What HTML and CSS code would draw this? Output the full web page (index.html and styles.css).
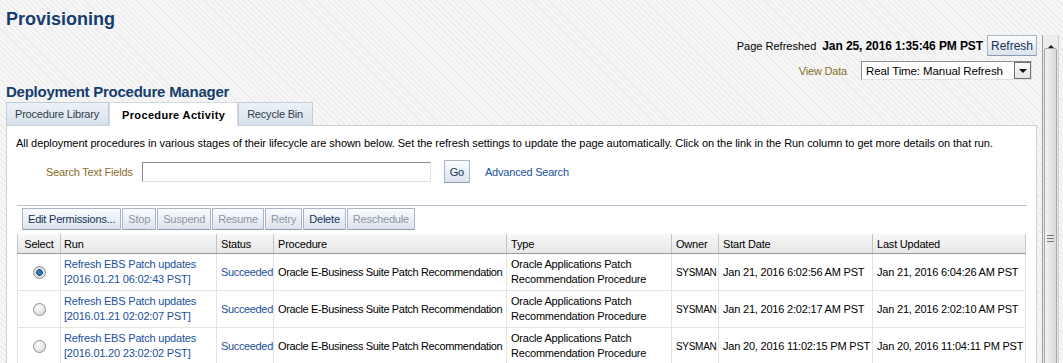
FILE: index.html
```html
<!DOCTYPE html>
<html lang="en">
<head>
    <meta charset="UTF-8">
    <title>Provisioning</title>
    <link rel="stylesheet" href="styles.css">
</head>
<body>
    <h1 class="page-title">Provisioning</h1>
    <div class="frame">
        <div class="main">
            <div class="refresh-bar">
                <span>Page Refreshed</span>
                <b class="when">Jan 25, 2016 1:35:46 PM PST</b>
                <button class="btn refresh">Refresh</button>
            </div>
            <div class="view-row">
                <span class="label">View Data</span>
                <div class="select">
                    <span>Real Time: Manual Refresh</span>
                    <span class="select-arrow"></span>
                </div>
            </div>
            <h2 class="section-title">Deployment Procedure Manager</h2>
            <div class="tabs">
                <div class="tab">Procedure Library</div>
                <div class="tab active">Procedure Activity</div>
                <div class="tab">Recycle Bin</div>
            </div>
            <div class="panel">
                <p class="intro">All deployment procedures in various stages of their lifecycle are shown below. Set the refresh settings to update the page automatically. Click on the link in the Run column to get more details on that run.</p>
                <div class="search">
                    <span class="label">Search Text Fields</span>
                    <div class="text-input"></div>
                    <button class="btn go">Go</button>
                    <a class="link" href="#">Advanced Search</a>
                </div>
                <div class="sep"></div>
                <div class="toolbar">
                    <button class="btn">Edit Permissions...</button>
                    <button class="btn off">Stop</button>
                    <button class="btn off">Suspend</button>
                    <button class="btn off">Resume</button>
                    <button class="btn off">Retry</button>
                    <button class="btn">Delete</button>
                    <button class="btn off">Reschedule</button>
                </div>
                <table class="runs">
                    <colgroup>
                        <col style="width:43px">
                        <col style="width:156px">
                        <col style="width:57px">
                        <col style="width:233px">
                        <col style="width:165px">
                        <col style="width:47px">
                        <col style="width:154px">
                        <col style="width:153px">
                    </colgroup>
                    <thead>
                        <tr>
                            <th class="sel">Select</th>
                            <th class="run">Run</th>
                            <th>Status</th>
                            <th>Procedure</th>
                            <th>Type</th>
                            <th>Owner</th>
                            <th>Start Date</th>
                            <th>Last Updated</th>
                        </tr>
                    </thead>
                    <tbody>
                        <tr>
                            <td class="sel"><span class="radio on"></span></td>
                            <td class="run"><a class="link" href="#">Refresh EBS Patch updates<br>[2016.01.21 06:02:43 PST]</a></td>
                            <td class="tight"><a class="link" href="#">Succeeded</a></td>
                            <td class="tight">Oracle E-Business Suite Patch Recommendation</td>
                            <td>Oracle Applications Patch<br>Recommendation Procedure</td>
                            <td class="owner">SYSMAN</td>
                            <td>Jan 21, 2016 6:02:56 AM PST</td>
                            <td>Jan 21, 2016 6:04:26 AM PST</td>
                        </tr>
                        <tr>
                            <td class="sel"><span class="radio"></span></td>
                            <td class="run"><a class="link" href="#">Refresh EBS Patch updates<br>[2016.01.21 02:02:07 PST]</a></td>
                            <td class="tight"><a class="link" href="#">Succeeded</a></td>
                            <td class="tight">Oracle E-Business Suite Patch Recommendation</td>
                            <td>Oracle Applications Patch<br>Recommendation Procedure</td>
                            <td class="owner">SYSMAN</td>
                            <td>Jan 21, 2016 2:02:17 AM PST</td>
                            <td>Jan 21, 2016 2:02:10 AM PST</td>
                        </tr>
                        <tr>
                            <td class="sel"><span class="radio"></span></td>
                            <td class="run"><a class="link" href="#">Refresh EBS Patch updates<br>[2016.01.20 23:02:02 PST]</a></td>
                            <td class="tight"><a class="link" href="#">Succeeded</a></td>
                            <td class="tight">Oracle E-Business Suite Patch Recommendation</td>
                            <td>Oracle Applications Patch<br>Recommendation Procedure</td>
                            <td class="owner">SYSMAN</td>
                            <td>Jan 20, 2016 11:02:15 PM PST</td>
                            <td>Jan 20, 2016 11:04:11 PM PST</td>
                        </tr>
                    </tbody>
                </table>
            </div>
        </div>
        <div class="scrollbar">
            <div class="sb-up"></div>
            <div class="sb-thumb"><span class="grip"></span></div>
        </div>
    </div>
</body>
</html>
```

FILE: styles.css
```css
body {
    margin: 0;
    padding: 0 0 0 6px;
    height: 363px;
    overflow: hidden;
    font-family: "Liberation Sans", Arial, sans-serif;
    font-size: 11px;
    letter-spacing: -0.2px;
    color: #000;
    background-color: #f6f6f6;
    background-image: repeating-linear-gradient(45deg, #ebebeb 0 1px, transparent 1px 4px);
}

.page-title {
    margin: 0;
    padding-top: 8px;
    font-size: 18px;
    line-height: 22px;
    color: #163d6e;
    letter-spacing: 0;
}

.frame {
    display: flex;
    gap: 5px;
    margin-top: 5px;
}

.main {
    width: 1031px;
    flex: none;
}

.refresh-bar {
    display: flex;
    justify-content: flex-end;
    align-items: center;
    height: 21px;
    letter-spacing: 0;
}

.refresh-bar .when {
    margin: 0 4px 0 6px;
    font-size: 12px;
    letter-spacing: -0.1px;
}

.btn {
    font: inherit;
    letter-spacing: inherit;
    height: 21px;
    padding: 0 5px;
    border: 1px solid #a9b5c4;
    border-bottom-color: #8e9bac;
    background: linear-gradient(#fafcfe, #dbe3ed);
    color: #17325a;
    border-radius: 1px;
}

.btn.refresh {
    width: 50px;
    padding: 0;
    font-size: 12px;
}

.btn.off {
    color: #8f969f;
}

.label {
    color: #8a6c2b;
}

.view-row {
    display: flex;
    justify-content: flex-end;
    align-items: center;
    gap: 14px;
    margin-top: 5px;
    padding-right: 5px;
}

.select {
    width: 171px;
    height: 19px;
    box-sizing: border-box;
    background: #fff;
    border: 1px solid;
    border-color: #8c8c8c #e2e2e2 #e2e2e2 #8c8c8c;
    display: flex;
    align-items: center;
    justify-content: space-between;
    padding-left: 4px;
    font-size: 11.5px;
    letter-spacing: -0.1px;
}

.select-arrow {
    width: 17px;
    height: 17px;
    box-sizing: border-box;
    border: 1px solid #6f6f6f;
    background: linear-gradient(#fbfbfb, #e4e4e4);
    display: flex;
    align-items: center;
    justify-content: center;
}

.select-arrow::after {
    content: "";
    border-left: 4px solid transparent;
    border-right: 4px solid transparent;
    border-top: 4px solid #111;
}

.section-title {
    margin: 3px 0 1px;
    font-size: 15px;
    line-height: 18px;
    color: #163d6e;
    letter-spacing: -0.25px;
}

.tabs {
    display: flex;
    height: 23px;
}

.tab {
    display: flex;
    align-items: center;
    padding: 0 9px 0 8px;
    border: 1px solid #c3ccd8;
    border-bottom: 0;
    background: linear-gradient(#edf2f7, #d7e2ed);
    color: #323c48;
}

.tab.active {
    position: relative;
    margin-bottom: -1px;
    padding: 0 12px;
    background: #fff;
    color: #000;
    font-weight: bold;
    letter-spacing: 0.35px;
    border-color: #d3d9e0;
}

.panel {
    height: 400px;
    background: #fff;
    border: 1px solid #c9d1da;
    padding: 0 9px 0 10px;
}

.intro {
    margin: 10px 0 0 -1px;
    line-height: 14px;
    letter-spacing: -0.05px;
}

.search {
    display: flex;
    align-items: center;
    height: 23px;
    margin-top: 10px;
    padding-left: 29px;
}

.text-input {
    width: 289px;
    height: 20px;
    box-sizing: border-box;
    margin-left: 9px;
    background: #fff;
    border: 1px solid;
    border-color: #8c8c8c #e2e2e2 #e2e2e2 #8c8c8c;
}

.btn.go {
    height: 23px;
    margin-left: 13px;
    padding: 0 5px;
}

.search .link {
    margin-left: 15px;
}

.link {
    color: #22509d;
    text-decoration: none;
}

.sep {
    height: 1px;
    margin-top: 22px;
    background: #b6c2cf;
}

.toolbar {
    display: flex;
    gap: 1px;
    margin-top: 2px;
    padding-left: 5px;
}

.toolbar .btn {
    height: 22px;
    padding: 0 5px;
}

.runs {
    margin-top: 4px;
    width: 1009px;
    table-layout: fixed;
    border-collapse: collapse;
}

.runs th {
    height: 19px;
    padding: 0 4px;
    text-align: left;
    font-weight: normal;
    white-space: nowrap;
    background: linear-gradient(#f8f8f8, #e7e7e7);
    border-left: 1px solid #c4c4c4;
    border-right: 1px solid #c4c4c4;
    border-bottom: 1px solid #9a9a9a;
}

.runs td {
    height: 36px;
    padding: 0 4px;
    line-height: 15px;
    white-space: nowrap;
    overflow: hidden;
    border: 1px solid #e3e3e3;
    border-top: 0;
}

.runs td.tight {
    padding-right: 0;
    letter-spacing: -0.35px;
}

.runs td.owner {
    padding: 0 0 0 4px;
    font-size: 10px;
    letter-spacing: -0.3px;
}

.runs .sel {
    text-align: center;
    padding: 0;
}

.runs .run {
    padding-left: 3px;
}

.radio {
    display: inline-block;
    width: 11px;
    height: 11px;
    border-radius: 50%;
    border: 1px solid #8f8f8f;
    background: radial-gradient(circle at 40% 35%, #ffffff, #d0d0d0);
    vertical-align: middle;
}

.radio.on {
    background: radial-gradient(circle, #2f7fc4 0 1.5px, #0b3f7a 3px, #e4e4e4 3.5px, #c9c9c9);
}

.scrollbar {
    width: 15px;
    height: 393px;
    flex: none;
    display: flex;
    flex-direction: column;
    background: #ececec;
    border-left: 1px solid #9d9d9d;
    border-right: 1px solid #cfcfcf;
}

.sb-up {
    height: 13px;
    display: flex;
    justify-content: center;
    padding-top: 4px;
    box-sizing: border-box;
}

.sb-up::after {
    content: "";
    border-left: 3px solid transparent;
    border-right: 3px solid transparent;
    border-bottom: 3px solid #222;
}

.sb-thumb {
    flex: 1;
    margin: 0 1px;
    border: 1px solid #a6a6a6;
    border-radius: 2px;
    background: linear-gradient(90deg, #f3f3f3, #d9d9d9);
    display: flex;
    align-items: center;
    justify-content: center;
}

.grip {
    width: 7px;
    height: 5px;
    border-top: 1px solid #777;
    border-bottom: 1px solid #777;
    background: linear-gradient(#777, #777) center / 100% 1px no-repeat;
}
```
